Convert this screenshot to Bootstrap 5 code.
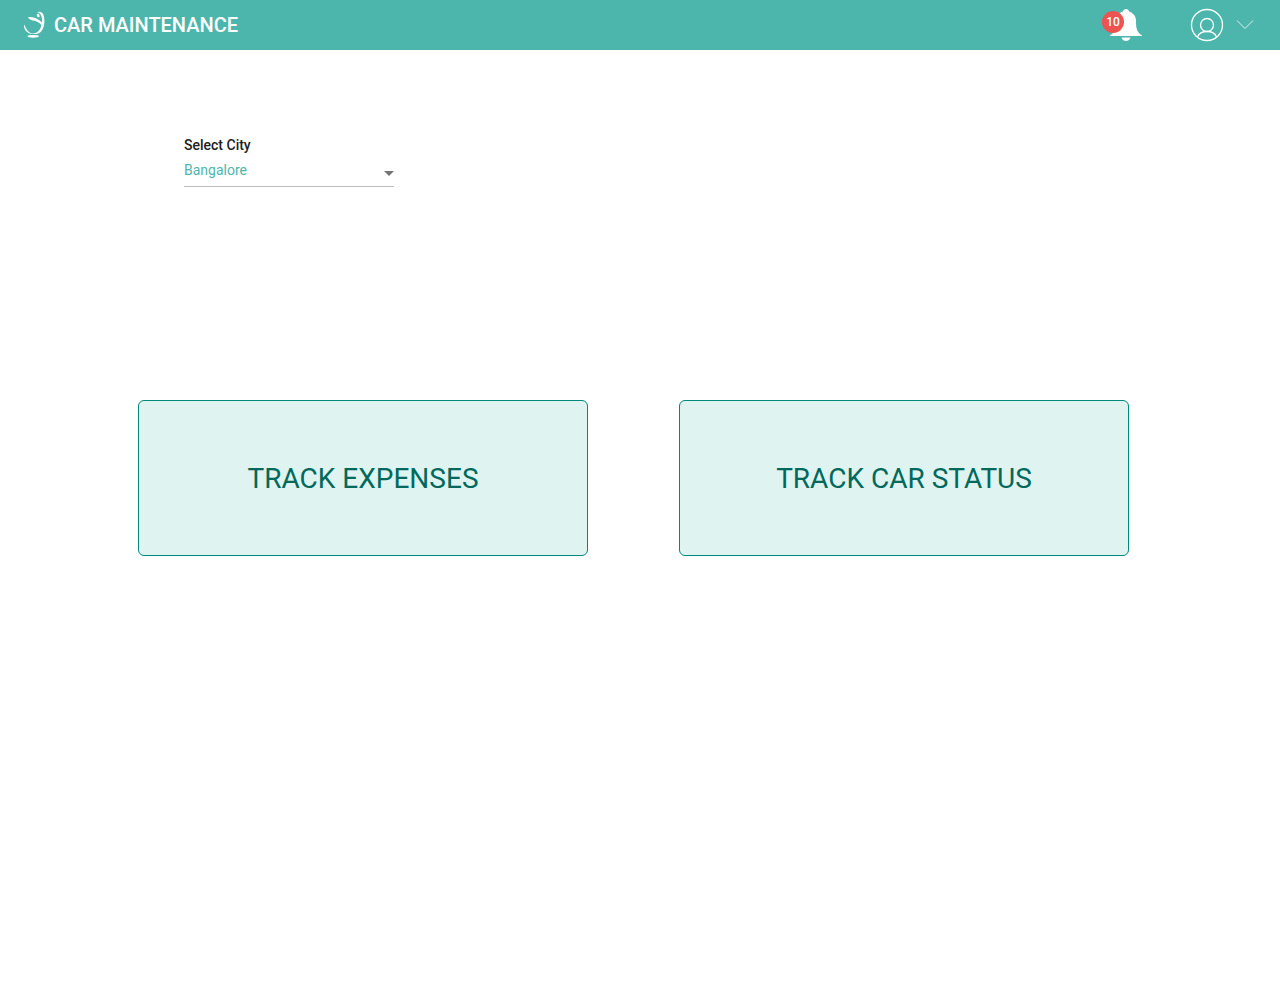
<!DOCTYPE html>
<html lang="en">
<head>
<meta charset="utf-8">
<meta name="viewport" content="width=device-width, initial-scale=1">
<title>Car Maintenance</title>
<link href="https://cdn.jsdelivr.net/npm/bootstrap@5.3.0/dist/css/bootstrap.min.css" rel="stylesheet">
<style>
  body { font-family: Roboto, "Liberation Sans", sans-serif; background: #fff; }
  .topbar { background: #4db6ac; min-height: 50px; padding: 0 25px 0 24px; }
  .brand-title { font-size: 20px; line-height: 30px; font-weight: 500; color: #fff; }
  .alerts { width: 40px; height: 34px; }
  .alert-count { width: 22px; height: 22px; left: 0; top: 3px; font-size: 12px; line-height: 22px; font-weight: 500; background: #ef5350; }
  .account { gap: 10px; }
  .header-actions { gap: 47px; }
  .page-main { padding: 84px 151px 48px 138px; }
  .city-field { width: 210px; margin-left: 46px; margin-bottom: 213px; }
  .city-label { font-size: 14px; line-height: 22px; font-weight: 500; color: #212121; }
  .city-select { height: 31px; padding: 0 20px 3px 0; font-size: 14px; line-height: 20px; color: #4db6ac; border: 0; border-bottom: 1px solid #bdbdbd; border-radius: 0; appearance: none; background: transparent; }
  .city-arrow { right: 0; bottom: 10px; pointer-events: none; }
  .tiles { --bs-gutter-x: 91px; --bs-gutter-y: 24px; }
  .tile { min-height: 156px; padding: 8px 12px 6px; font-size: 28px; line-height: 42px; color: #00695c; background: #dff3f1; border: 1px solid #00897b; border-radius: 6px; }
  .tile:hover, .tile:focus { color: #00695c; background: #cdebe8; border-color: #00695c; }
  @media (max-width: 991px) {
    .page-main { padding: 48px 24px; }
    .city-field { margin-left: 0; margin-bottom: 64px; }
  }
</style>
</head>
<body>
<header class="topbar d-flex align-items-center justify-content-between">
  <a href="#" class="d-flex align-items-center text-decoration-none gap-2">
    <svg width="22" height="30" viewBox="0 0 22 30" fill="#fff" aria-hidden="true">
      <path d="M0 14.500C1.500 16.500 2.500 20.500 6 22.800C7 23.500 8.500 24 10 24C4 24.500 -.5 20 0 14.500z"/>
      <path d="M13.500 2.200C15.500 1 18 2 19.300 4.500C21.500 10 20.500 19 16 22.500C14 24 11 24.500 8.500 23.500C13 23.500 16.500 20 17.500 15C14.500 12 12 10.500 8.500 10.500C6.500 10 5 9 4 7.300C9 6.300 14 8.500 18 12.500C18.500 8 17.500 3.500 13.500 2.200z"/>
      <ellipse cx="14.200" cy="5.500" rx="1.300" ry="1.900" transform="rotate(-25 14.200 5.500)"/>
      <ellipse cx="9.200" cy="26.300" rx="5.800" ry="1.400"/>
    </svg>
    <span class="brand-title">CAR MAINTENANCE</span>
  </a>
  <div class="header-actions d-flex align-items-center">
    <button type="button" class="alerts btn p-0 border-0 position-relative" aria-label="10 notifications">
      <svg class="d-block ms-auto" width="32" height="34" viewBox="0 0 32 34" fill="#fff" aria-hidden="true">
        <path d="M16 1c-1.700 0-2.800 1-3 2.500C8.500 4.800 6 8.500 6 13c0 8-1 11-6 14.500V28h32v-.5c-5-3.500-6-6.500-6-14.500 0-4.500-2.500-8.200-7-9.500C18.800 2 17.700 1 16 1zM11.500 29.500h9c-.5 2.300-2.300 3.500-4.500 3.500s-4-1.200-4.500-3.500z"/>
      </svg>
      <span class="alert-count position-absolute rounded-circle text-white text-center">10</span>
    </button>
    <button type="button" class="account btn p-0 border-0 d-flex align-items-center" aria-label="Account menu">
      <svg width="36" height="34" viewBox="0 0 36 34" fill="none" stroke="#fff" stroke-width="1.300" aria-hidden="true">
        <circle cx="18" cy="17" r="15.500"/>
        <circle cx="18" cy="17" r="6.500"/>
        <path d="M8.500 29c1.500-4 5-5.500 9.500-5.500s8 1.500 9.500 5.500"/>
      </svg>
      <svg width="20" height="14" viewBox="0 0 20 14" fill="none" stroke="#fff" stroke-width=".8" aria-hidden="true">
        <path d="M2 2.500l8 8 8-8"/>
      </svg>
    </button>
  </div>
</header>
<main class="page-main">
  <div class="city-field">
    <label class="city-label d-block" for="city">Select City</label>
    <div class="position-relative">
      <select id="city" class="city-select w-100 d-block">
        <option selected>Bangalore</option>
      </select>
      <svg class="city-arrow position-absolute" width="10" height="6" viewBox="0 0 10 6" fill="#757575" aria-hidden="true"><path d="M0 0h10L5 5z"/></svg>
    </div>
  </div>
  <div class="tiles row">
    <div class="col-12 col-lg-6"><a href="#" class="tile btn w-100 d-flex align-items-center justify-content-center">TRACK EXPENSES</a></div>
    <div class="col-12 col-lg-6"><a href="#" class="tile btn w-100 d-flex align-items-center justify-content-center">TRACK CAR STATUS</a></div>
  </div>
</main>
<script src="https://cdn.jsdelivr.net/npm/bootstrap@5.3.0/dist/js/bootstrap.bundle.min.js"></script>
</body>
</html>
